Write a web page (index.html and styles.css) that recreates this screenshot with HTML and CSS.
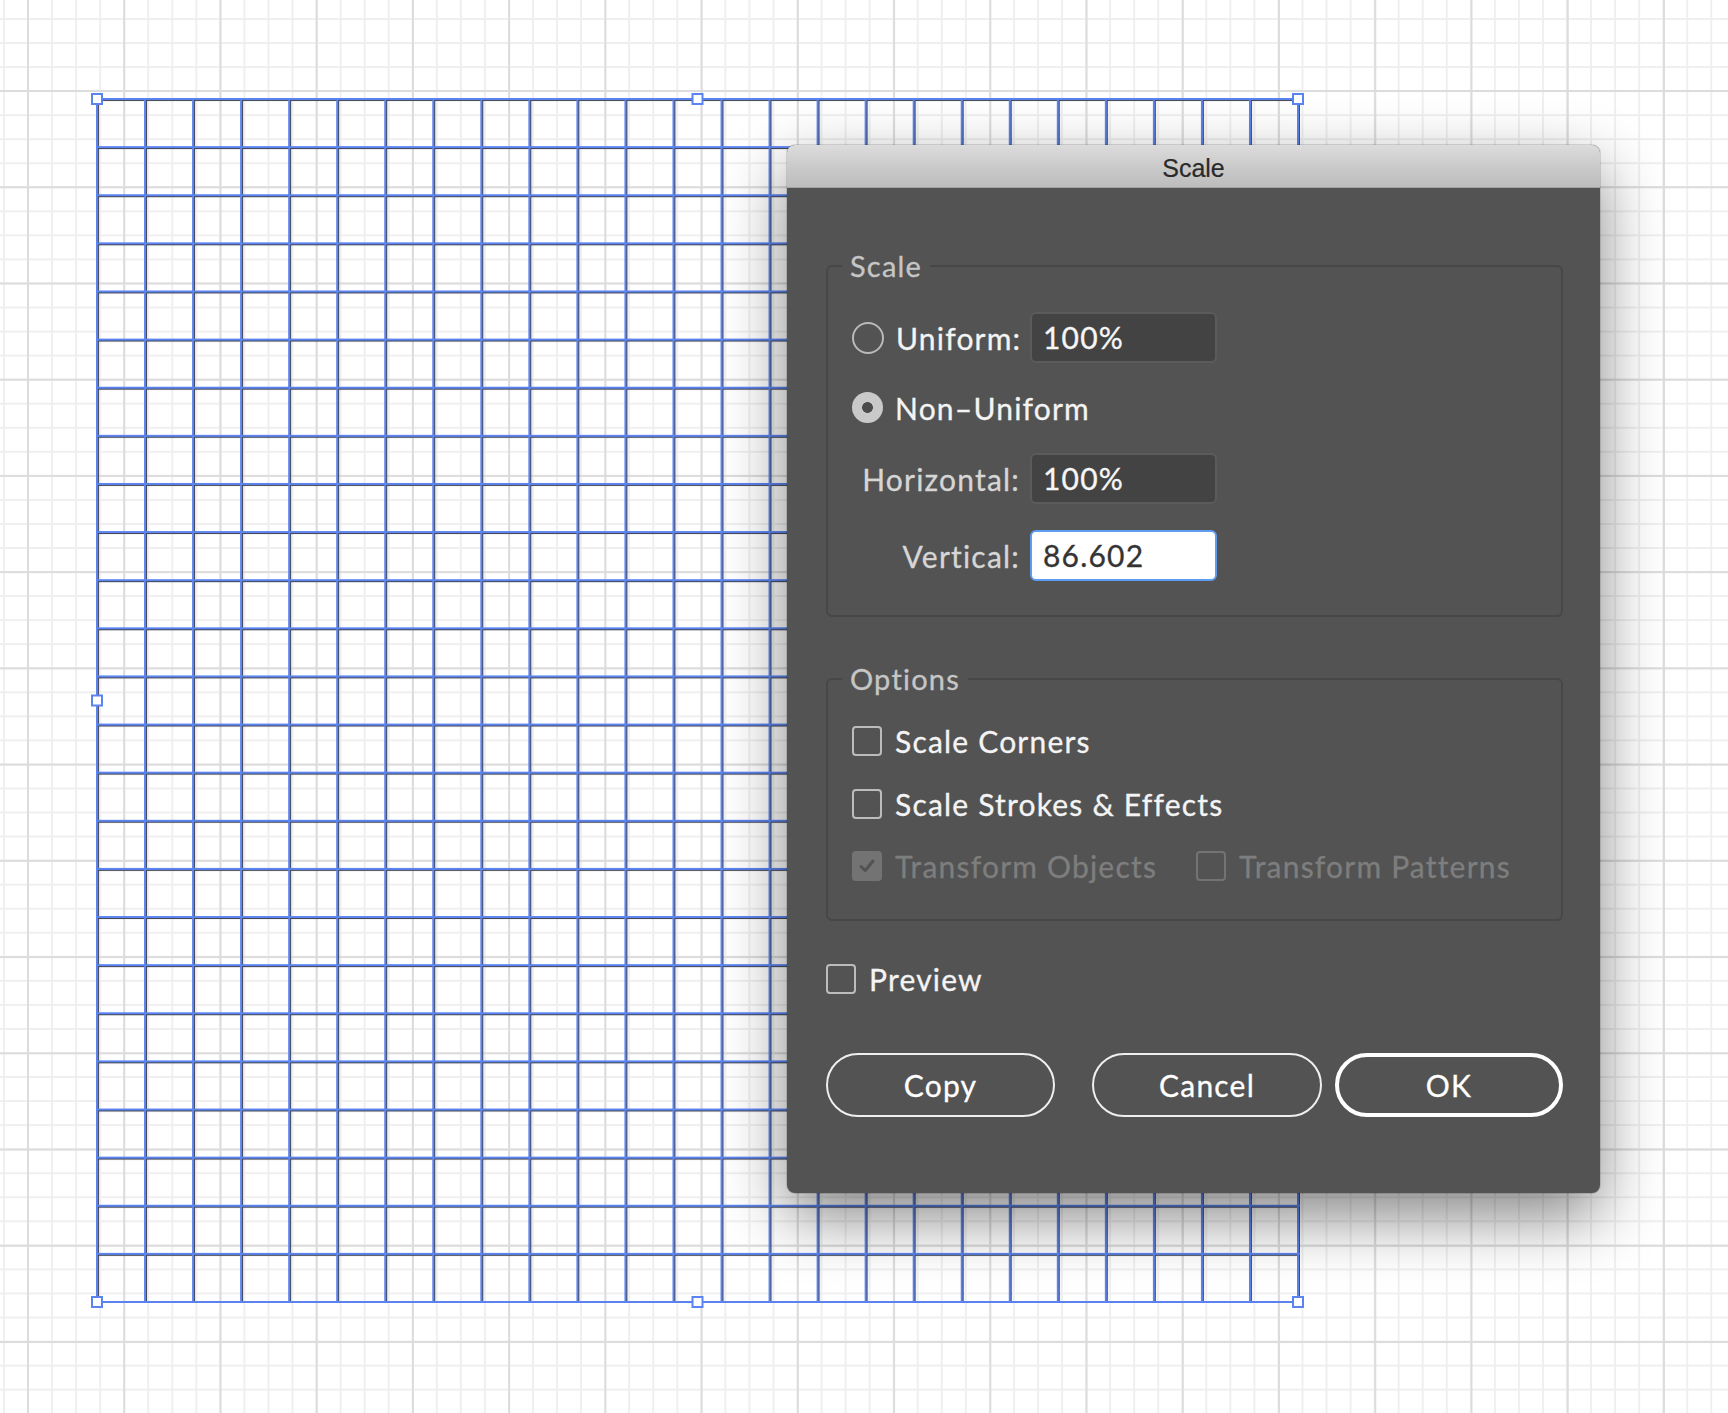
FILE: index.html
```html
<!DOCTYPE html>
<html lang="en">
<head>
<meta charset="utf-8">
<title>Scale</title>
<link rel="stylesheet" href="styles.css">
</head>
<body>
<svg class="artwork" width="1728" height="1413" viewBox="0 0 1728 1413" xmlns="http://www.w3.org/2000/svg">
  <defs>
    <pattern id="cells" x="96" y="98" width="48.04" height="48.12" patternUnits="userSpaceOnUse">
      <rect x="2" y="0" width="1" height="48.12" fill="#3e3f48"/>
      <rect x="0" y="2" width="48.04" height="1" fill="#3e3f48"/>
      <rect x="0" y="0" width="2" height="48.12" fill="#5b84f2"/>
      <rect x="0" y="0" width="48.04" height="2" fill="#5b84f2"/>
    </pattern>
  </defs>
  <rect x="96" y="98" width="1204" height="1205" fill="url(#cells)"/>
  <g class="handles" fill="#ffffff" stroke="#5b84f2" stroke-width="2">
    <rect x="92" y="94" width="10" height="10"/>
    <rect x="692.5" y="94" width="10" height="10"/>
    <rect x="1293" y="94" width="10" height="10"/>
    <rect x="92" y="695.5" width="10" height="10"/>
    <rect x="1293" y="695.5" width="10" height="10"/>
    <rect x="92" y="1297" width="10" height="10"/>
    <rect x="692.5" y="1297" width="10" height="10"/>
    <rect x="1293" y="1297" width="10" height="10"/>
  </g>
</svg>

<div class="dialog">
  <div class="titlebar">Scale</div>
  <div class="dialog-body">
    <div class="group group-scale">
      <span class="legend">Scale</span>
      <div class="row row-uniform">
        <div class="choice"><span class="radio"></span><span class="label">Uniform:</span></div>
        <span class="field">100%</span>
      </div>
      <div class="row row-nonuniform">
        <div class="choice"><span class="radio radio-on"></span><span class="label">Non–Uniform</span></div>
      </div>
      <div class="row row-horizontal">
        <span class="field-label">Horizontal:</span>
        <span class="field">100%</span>
      </div>
      <div class="row row-vertical">
        <span class="field-label">Vertical:</span>
        <span class="field field-focus">86.602</span>
      </div>
    </div>

    <div class="group group-options">
      <span class="legend">Options</span>
      <div class="check-row"><span class="checkbox"></span><span class="label">Scale Corners</span></div>
      <div class="check-row"><span class="checkbox"></span><span class="label">Scale Strokes &amp; Effects</span></div>
      <div class="check-row disabled">
        <span class="checkbox checkbox-on"><svg width="20" height="20" viewBox="0 0 20 20"><path d="M4 10.5 L8.2 14.5 L16 5" fill="none" stroke="#535353" stroke-width="3" stroke-linecap="round" stroke-linejoin="round"/></svg></span>
        <span class="label">Transform Objects</span>
        <span class="checkbox second"></span>
        <span class="label">Transform Patterns</span>
      </div>
    </div>

    <div class="check-row preview"><span class="checkbox"></span><span class="label">Preview</span></div>

    <div class="buttons">
      <span class="button btn-copy">Copy</span>
      <span class="button btn-cancel">Cancel</span>
      <span class="button btn-ok">OK</span>
    </div>
  </div>
</div>
</body>
</html>
```

FILE: styles.css
```css
html, body {
  margin: 0;
  padding: 0;
}

body {
  width: 1728px;
  height: 1413px;
  overflow: hidden;
  position: relative;
  background-color: #ffffff;
  background-image:
    linear-gradient(to right, #dcdcdc 0, #dcdcdc 2px, transparent 2px),
    linear-gradient(to bottom, #dcdcdc 0, #dcdcdc 2px, transparent 2px),
    linear-gradient(to right, #efefef 0, #efefef 2px, transparent 2px),
    linear-gradient(to bottom, #efefef 0, #efefef 2px, transparent 2px);
  background-size: 96.24px 100%, 100% 96.24px, 24.06px 100%, 100% 24.06px;
  background-position: 27px 0, 0 90px, 3px 0, 0 18px;
  font-family: Lato, "Open Sans", "Liberation Sans", sans-serif;
}

.artwork {
  position: absolute;
  left: 0;
  top: 0;
}

.dialog {
  position: absolute;
  left: 787px;
  top: 145px;
  width: 813px;
  height: 1048px;
  background: #535353;
  border-radius: 8px;
  overflow: hidden;
  box-shadow: 0 24px 64px rgba(0, 0, 0, 0.48), 0 0 0 1px rgba(0, 0, 0, 0.12);
}

.titlebar {
  height: 40px;
  padding-top: 2px;
  border-bottom: 1px solid #a2a2a2;
  background: linear-gradient(to bottom, #dcdcdc 0%, #c9c9c9 55%, #bdbdbd 100%);
  color: #2a2a2a;
  font-family: "Liberation Sans", Arial, sans-serif;
  font-size: 25px;
  line-height: 42px;
  text-align: center;
  -webkit-text-stroke: 0.2px #2a2a2a;
}

.dialog-body {
  padding: 0 37px 0 39px;
  display: flex;
  flex-direction: column;
  letter-spacing: 1.2px;
}

.group {
  position: relative;
  border: 2px solid #474747;
  border-radius: 6px;
  padding: 0 24px;
}

.legend {
  position: absolute;
  left: 14px;
  top: -18px;
  padding: 0 8px;
  background: #535353;
  color: #c6c6c6;
  font-size: 29px;
  line-height: 34px;
  -webkit-text-stroke: 0.3px #c6c6c6;
}

.group-scale {
  margin-top: 77px;
  padding-top: 45px;
  padding-bottom: 34px;
}

.row {
  display: flex;
  align-items: center;
  height: 51px;
}

.row-nonuniform { margin-top: 19px; }
.row-horizontal { margin-top: 20px; }
.row-vertical { margin-top: 26px; }

.choice {
  display: flex;
  align-items: center;
  gap: 12px;
  width: 168px;
  margin-right: 10px;
}

.radio {
  box-sizing: border-box;
  flex: none;
  width: 32px;
  height: 32px;
  border: 2px solid #b9b9b9;
  border-radius: 50%;
}

.radio-on {
  width: 31px;
  height: 31px;
  border: none;
  background: radial-gradient(circle, #4b4b4b 0, #4b4b4b 5px, #c9c9c9 5.8px);
}

.label {
  color: #f4f4f4;
  font-size: 30px;
  line-height: 36px;
  white-space: nowrap;
  -webkit-text-stroke: 0.3px #f4f4f4;
}

.field-label {
  width: 168px;
  margin-right: 10px;
  text-align: right;
  color: #d6d6d6;
  font-size: 30px;
  line-height: 36px;
  white-space: nowrap;
  -webkit-text-stroke: 0.3px #d6d6d6;
}

.field {
  box-sizing: border-box;
  width: 187px;
  height: 51px;
  padding-left: 11px;
  border: 2px solid #5b5b5b;
  border-radius: 6px;
  background: #434343;
  color: #f6f6f6;
  font-size: 30px;
  line-height: 46px;
  -webkit-text-stroke: 0.3px #f6f6f6;
}

.field-focus {
  background: #ffffff;
  border-color: #5d9cef;
  color: #343434;
  -webkit-text-stroke: 0.3px #343434;
}

.group-options {
  margin-top: 61px;
  padding-top: 46px;
  padding-bottom: 38px;
  display: flex;
  flex-direction: column;
  gap: 32.5px;
}

.check-row {
  display: flex;
  align-items: center;
  height: 30px;
}

.checkbox {
  box-sizing: border-box;
  flex: none;
  display: flex;
  align-items: center;
  justify-content: center;
  width: 30px;
  height: 30px;
  margin-right: 13px;
  border: 2px solid #bcbcbc;
  border-radius: 4px;
}

.disabled .label {
  color: #7e7e7e;
  -webkit-text-stroke: 0.3px #7e7e7e;
}

.disabled .checkbox {
  border-color: #737373;
}

.disabled .checkbox-on {
  border: none;
  background: #737373;
}

.checkbox.second {
  margin-left: 39px;
}

.preview {
  margin-top: 42.5px;
}

.buttons {
  display: flex;
  margin-top: 59.5px;
}

.button {
  box-sizing: border-box;
  display: flex;
  align-items: center;
  justify-content: center;
  height: 64px;
  border: 2px solid #efefef;
  border-radius: 32px;
  color: #ffffff;
  font-size: 30px;
  -webkit-text-stroke: 0.3px #ffffff;
}

.btn-copy {
  width: 229px;
  margin-right: 37px;
}

.btn-cancel {
  width: 230px;
  margin-right: 13px;
}

.btn-ok {
  width: 228px;
  border: 4px solid #ffffff;
}
```
